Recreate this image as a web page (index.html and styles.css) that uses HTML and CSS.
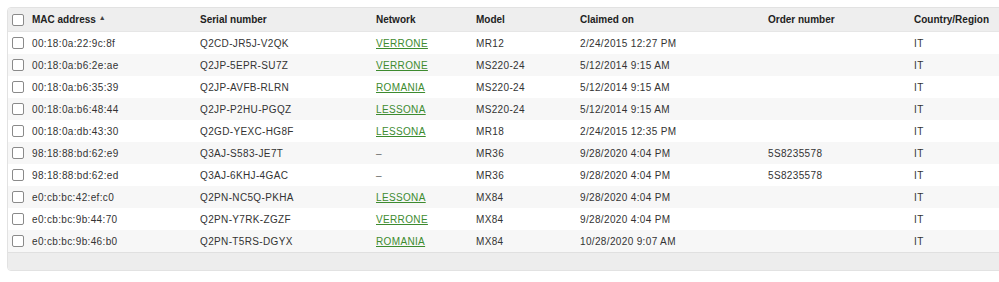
FILE: index.html
```html
<!DOCTYPE html>
<html>
<head>
<meta charset="utf-8">
<link rel="stylesheet" href="styles.css">
</head>
<body>
<div class="frame">
  <div class="panel">
    <table class="grid">
      <colgroup>
        <col class="c-cb"><col class="c-mac"><col class="c-serial"><col class="c-net"><col class="c-model"><col class="c-claimed"><col class="c-order"><col class="c-country">
      </colgroup>
      <thead>
        <tr>
          <th><span class="cb"></span></th>
          <th>MAC address <span class="sort">▲</span></th>
          <th>Serial number</th>
          <th>Network</th>
          <th>Model</th>
          <th>Claimed on</th>
          <th>Order number</th>
          <th>Country/Region</th>
        </tr>
      </thead>
      <tbody>
        <tr><td><span class="cb"></span></td><td>00:18:0a:22:9c:8f</td><td>Q2CD-JR5J-V2QK</td><td><a href="#">VERRONE</a></td><td>MR12</td><td>2/24/2015 12:27 PM</td><td></td><td>IT</td></tr>
        <tr><td><span class="cb"></span></td><td>00:18:0a:b6:2e:ae</td><td>Q2JP-5EPR-SU7Z</td><td><a href="#">VERRONE</a></td><td>MS220-24</td><td>5/12/2014 9:15 AM</td><td></td><td>IT</td></tr>
        <tr><td><span class="cb"></span></td><td>00:18:0a:b6:35:39</td><td>Q2JP-AVFB-RLRN</td><td><a href="#">ROMANIA</a></td><td>MS220-24</td><td>5/12/2014 9:15 AM</td><td></td><td>IT</td></tr>
        <tr><td><span class="cb"></span></td><td>00:18:0a:b6:48:44</td><td>Q2JP-P2HU-PGQZ</td><td><a href="#">LESSONA</a></td><td>MS220-24</td><td>5/12/2014 9:15 AM</td><td></td><td>IT</td></tr>
        <tr><td><span class="cb"></span></td><td>00:18:0a:db:43:30</td><td>Q2GD-YEXC-HG8F</td><td><a href="#">LESSONA</a></td><td>MR18</td><td>2/24/2015 12:35 PM</td><td></td><td>IT</td></tr>
        <tr><td><span class="cb"></span></td><td>98:18:88:bd:62:e9</td><td>Q3AJ-S583-JE7T</td><td class="dash">–</td><td>MR36</td><td>9/28/2020 4:04 PM</td><td>5S8235578</td><td>IT</td></tr>
        <tr><td><span class="cb"></span></td><td>98:18:88:bd:62:ed</td><td>Q3AJ-6KHJ-4GAC</td><td class="dash">–</td><td>MR36</td><td>9/28/2020 4:04 PM</td><td>5S8235578</td><td>IT</td></tr>
        <tr><td><span class="cb"></span></td><td>e0:cb:bc:42:ef:c0</td><td>Q2PN-NC5Q-PKHA</td><td><a href="#">LESSONA</a></td><td>MX84</td><td>9/28/2020 4:04 PM</td><td></td><td>IT</td></tr>
        <tr><td><span class="cb"></span></td><td>e0:cb:bc:9b:44:70</td><td>Q2PN-Y7RK-ZGZF</td><td><a href="#">VERRONE</a></td><td>MX84</td><td>9/28/2020 4:04 PM</td><td></td><td>IT</td></tr>
        <tr><td><span class="cb"></span></td><td>e0:cb:bc:9b:46:b0</td><td>Q2PN-T5RS-DGYX</td><td><a href="#">ROMANIA</a></td><td>MX84</td><td>10/28/2020 9:07 AM</td><td></td><td>IT</td></tr>
      </tbody>
    </table>
    <div class="footer"></div>
  </div>
</div>
</body>
</html>
```
FILE: styles.css
```css
html, body {
  margin: 0;
  padding: 0;
  background: #fff;
  overflow: hidden;
}
.frame {
  width: 999px;
  height: 282px;
  overflow: hidden;
  padding: 7px 0 0 7px;
  box-sizing: border-box;
}
.panel {
  width: 1010px;
  border: 1px solid #e2e2e2;
  border-radius: 4px 0 0 4px;
  overflow: hidden;
  font-family: "Liberation Sans", Arial, sans-serif;
  font-size: 10px;
  color: #333;
}
.grid {
  width: 100%;
  border-collapse: collapse;
  table-layout: fixed;
}
.c-cb { width: 19px; }
.c-mac { width: 168px; }
.c-serial { width: 176px; }
.c-net { width: 100px; }
.c-model { width: 104px; }
.c-claimed { width: 188px; }
.c-order { width: 146px; }
.c-country { width: 109px; }
.grid th, .grid td {
  padding: 0 0 0 5px;
  text-align: left;
  white-space: nowrap;
  vertical-align: middle;
}
.grid th {
  height: 23px;
  background: #eeeeee;
  font-weight: bold;
  color: #222;
  border-bottom: 1px solid #e6e6e6;
}
.grid td {
  height: 22px;
  letter-spacing: 0.35px;
}
.grid th:first-child, .grid td:first-child {
  padding-left: 4px;
}
.grid tbody tr:nth-child(even) td {
  background: #f7f7f7;
}
.cb {
  display: block;
  width: 10px;
  height: 10px;
  border: 1px solid #8a8a8a;
  border-radius: 2px;
  background: #fff;
}
.sort {
  font-size: 7px;
  vertical-align: 3px;
  color: #444;
}
.grid a {
  color: #3d8b2f;
  text-decoration: underline;
}
.dash {
  color: #666;
}
.footer {
  height: 17px;
  background: #ededed;
  border-top: 1px solid #e0e0e0;
}
```
